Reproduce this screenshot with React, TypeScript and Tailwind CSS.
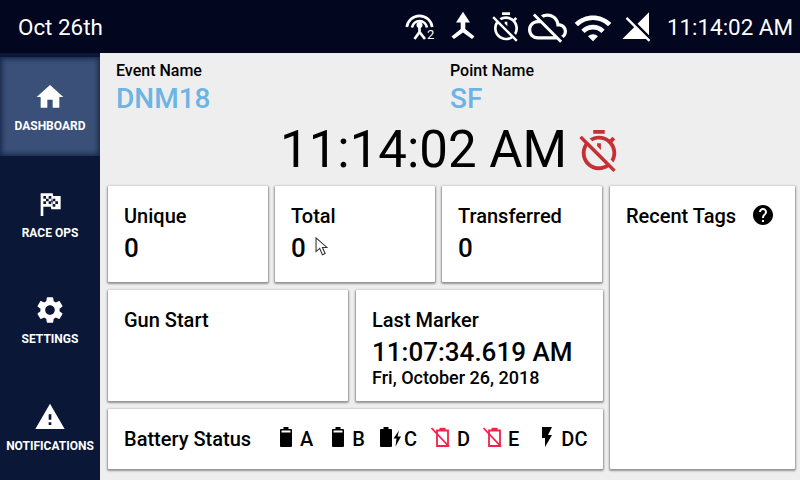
import type { ReactNode } from "react";

const Icon = ({ d, className }: { d: string; className: string }) => (
  <svg viewBox="0 0 24 24" fill="currentColor" className={className}>
    <path d={d} />
  </svg>
);

const HOME = "M10 20v-6h4v6h5v-8h3L12 3 2 12h3v8z";
const FLAG =
  "M14.4,6H20V16H13L12.6,14H7V21H5V4H14L14.4,6M14,14H16V12H18V10H16V8H14V10L13,8V6H11V8H9V6H7V8H9V10H7V12H9V10H11V12H13V10L14,12V14M11,10V8H13V10H11M14,10H16V12H14V10Z";
const GEAR =
  "M19.14 12.94c.04-.3.06-.61.06-.94 0-.32-.02-.64-.07-.94l2.03-1.58c.18-.14.23-.41.12-.61l-1.92-3.32c-.12-.22-.37-.29-.59-.22l-2.39.96c-.5-.38-1.03-.7-1.62-.94l-.36-2.54c-.04-.24-.24-.41-.48-.41h-3.84c-.24 0-.43.17-.47.41l-.36 2.54c-.59.24-1.13.57-1.62.94l-2.39-.96c-.22-.08-.47 0-.59.22L2.74 8.87c-.12.21-.08.47.12.61l2.03 1.58c-.05.3-.09.63-.09.94s.02.64.07.94l-2.03 1.58c-.18.14-.23.41-.12.61l1.92 3.32c.12.22.37.29.59.22l2.39-.96c.5.38 1.03.7 1.62.94l.36 2.54c.05.24.24.41.48.41h3.84c.24 0 .44-.17.47-.41l.36-2.54c.59-.24 1.13-.56 1.62-.94l2.39.96c.22.08.47 0 .59-.22l1.92-3.32c.12-.22.07-.47-.12-.61l-2.01-1.58zM12 15.6c-1.98 0-3.6-1.62-3.6-3.6s1.62-3.6 3.6-3.6 3.6 1.62 3.6 3.6-1.62 3.6-3.6 3.6z";
const WARNING = "M1 21h22L12 2 1 21zm12-3h-2v-2h2v2zm0-4h-2v-4h2v4z";
const TIMER_OFF =
  "M19.04 4.55l-1.42 1.42C16.07 4.74 14.12 4 12 4c-1.83 0-3.53.55-4.95 1.48l1.46 1.46C9.53 6.35 10.73 6 12 6c3.87 0 7 3.13 7 7 0 1.27-.35 2.47-.94 3.49l1.45 1.45C20.45 16.53 21 14.83 21 13c0-2.12-.74-4.07-1.97-5.61l1.42-1.42-1.41-1.42zM15 1H9v2h6V1zm-4 8.44l2 2V8h-2v1.44zM3.02 4L1.75 5.27 4.5 8.03C3.55 9.45 3 11.16 3 13c0 4.97 4.02 9 8.99 9 1.84 0 3.55-.55 4.98-1.5l2.5 2.5 1.27-1.27-7.71-7.71L3.02 4zM12 20c-3.87 0-7-3.13-7-7 0-1.28.35-2.48.95-3.52l9.56 9.56c-1.03.61-2.23.96-3.51.96z";
const CLOUD_OFF =
  "M19.35 10.04C18.67 6.59 15.64 4 12 4c-1.48 0-2.85.43-4.01 1.17l1.46 1.46C10.21 6.23 11.08 6 12 6c3.04 0 5.5 2.46 5.5 5.5v.5H19c1.66 0 3 1.34 3 3 0 1.13-.64 2.11-1.56 2.62l1.45 1.45C23.16 18.16 24 16.68 24 15c0-2.64-2.05-4.78-4.65-4.96zM3 5.27l2.75 2.74C2.56 8.15 0 10.77 0 14c0 3.31 2.69 6 6 6h11.73l2 2L21 20.73 4.27 4 3 5.27zM7.73 10l8 8H6c-2.21 0-4-1.79-4-4s1.79-4 4-4h1.73z";
const WIFI =
  "M1 9l2 2c4.97-4.97 13.03-4.97 18 0l2-2C16.93 2.93 7.08 2.93 1 9zm8 8l3 3 3-3c-1.65-1.66-4.34-1.66-6 0zm-4-4l2 2c2.76-2.76 7.24-2.76 10 0l2-2C15.14 9.14 8.87 9.14 5 13z";
const SIGNAL_OFF =
  "M21 1l-8.59 8.59L21 18.18V1zM4.77 4.5L3.5 5.77l6.36 6.36L1 21h17.73l2 2L22 21.73 4.77 4.5z";
const HELP =
  "M12 2C6.48 2 2 6.48 2 12s4.48 10 10 10 10-4.48 10-10S17.52 2 12 2zm1 17h-2v-2h2v2zm2.07-7.75l-.9.92C13.45 12.9 13 13.5 13 15h-2v-.5c0-1.1.45-2.1 1.17-2.83l1.24-1.26c.37-.36.59-.86.59-1.41 0-1.1-.9-2-2-2s-2 .9-2 2H8c0-2.21 1.79-4 4-4s4 1.79 4 4c0 .88-.36 1.68-.93 2.25z";
const BOLT = "M7 2v11h3v9l7-12h-4l4-8z";

const Merge = () => (
  <svg viewBox="0 0 40 40" fill="currentColor" className="w-[40px] h-[40px]">
    <path d="M20 4.800 27 15.500H22.300V22L31.500 29.500 29 32 20 25.500 11 32 8.500 29.500 17.700 22V15.500H13Z" />
  </svg>
);

const Antenna = () => (
  <svg viewBox="0 0 32 32" className="w-[32px] h-[32px] text-white" fill="none" stroke="currentColor" strokeWidth="2.7">
    <path d="M2.800 16A12.800 12.800 0 0 1 28.200 16" />
    <path d="M8 16.500A7.600 7.600 0 0 1 23 16.500" />
    <circle cx="15.500" cy="14" r="3" fill="currentColor" stroke="none" />
    <path d="M15.500 14v7L10.500 28M15.500 21l5.500 7" />
  </svg>
);

const Battery = () => (
  <svg viewBox="0 0 14 20" className="w-[14px] h-[20px] text-black" fill="currentColor">
    <path d="M4.500 0h5v2h2.600c.5 0 .9.4.9.9v16.200c0 .5-.4.9-.9.9H1.900c-.5 0-.9-.4-.9-.9V2.900c0-.5.4-.9.9-.9h2.600z" />
    <rect x="2.500" y="3.500" width="9" height="2" fill="#fff" />
  </svg>
);

const BatteryCharging = () => (
  <svg viewBox="0 0 24 20" className="w-[24px] h-[20px] text-black" fill="currentColor">
    <path d="M4.500 0h5v2h2.600c.5 0 .9.4.9.9v16.200c0 .5-.4.9-.9.9H1.900c-.5 0-.9-.4-.9-.9V2.900c0-.5.4-.9.9-.9h2.600z" />
    <path d="M20 3.500 14.500 11.500h3l-1 8 5.500-10h-3.500l1.500-6z" />
  </svg>
);

const BatteryOff = () => (
  <svg viewBox="0 0 20 20" className="w-[20px] h-[20px] text-[#f0244c]" fill="none" stroke="currentColor" strokeWidth="1.800">
    <path d="M6 3.500h11v15.500H6z" />
    <path d="M8.500 0.800h6v2.500h-6z" fill="currentColor" stroke="none" />
    <path d="M0.500 1 18 19.500" />
  </svg>
);

const Card = ({ className, children }: { className: string; children?: ReactNode }) => (
  <div className={`bg-white rounded-[1px] shadow-[0_1px_2px_1px_rgba(0,0,0,0.38)] ${className}`}>{children}</div>
);

const Stat = ({ label, value, children }: { label: string; value: string; children?: ReactNode }) => (
  <Card className="h-[96px] w-[160px] pl-[16px] pt-[18px] text-black">
    <div className="text-[20px] leading-[24px] font-medium">{label}</div>
    <div className="flex mt-[6px]">
      <span className="text-[26px] leading-[28px] font-medium">{value}</span>
      {children}
    </div>
  </Card>
);

const NavItem = ({ d, label, active }: { d: string; label: string; active?: boolean }) => (
  <div
    className={`h-[99px] flex flex-col items-center text-white ${
      active ? "bg-[#3a5078] shadow-[inset_0_0_5px_2px_rgba(11,23,55,0.7)]" : ""
    }`}
  >
    <Icon d={d} className="w-[32px] h-[32px] mt-[24px] shrink-0" />
    <span className="text-[12px] leading-[14px] font-bold mt-[6px] whitespace-nowrap">{label}</span>
  </div>
);

const Cell = ({ children, label, gap }: { children: ReactNode; label: string; gap: string }) => (
  <div className={`flex items-center ${gap}`}>
    <div className="flex -mt-[4px]">{children}</div>
    <span className="text-[20px] leading-[24px] font-medium">{label}</span>
  </div>
);

export default function App() {
  return (
    <div className="w-[800px] h-[480px] flex flex-col overflow-hidden bg-[#eeeeee] font-['Roboto',sans-serif]">
      <header className="h-[53px] shrink-0 bg-[#02061f] text-white flex items-center pl-[18px] pr-[7px]">
        <span className="text-[22.4px] leading-[28px]">Oct 26th</span>
        <div className="ml-auto flex items-center">
          <div className="relative w-[39px] h-[32px]">
            <Antenna />
            <span className="absolute left-[23px] top-[17px] text-[13px] leading-[14px]">2</span>
          </div>
          <Merge />
          <Icon d={TIMER_OFF} className="w-[32px] h-[32px] ml-[7px]" />
          <Icon d={CLOUD_OFF} className="w-[39px] h-[39px] ml-[6px]" />
          <Icon d={WIFI} className="w-[40px] h-[40px] ml-[6px] mt-[2px]" />
          <Icon d={SIGNAL_OFF} className="w-[32px] h-[32px] ml-[8px]" />
          <span className="text-[22.4px] leading-[28px] ml-[14px]">11:14:02 AM</span>
        </div>
      </header>
      <div className="flex flex-1 min-h-0">
        <nav className="w-[100px] shrink-0 bg-[#0b1737] flex flex-col pt-[4px] gap-[7.5px]">
          <NavItem d={HOME} label="DASHBOARD" active />
          <NavItem d={FLAG} label="RACE OPS" />
          <NavItem d={GEAR} label="SETTINGS" />
          <NavItem d={WARNING} label="NOTIFICATIONS" />
        </nav>
        <main className="flex-1 min-w-0 pl-[8px] text-black">
          <div className="flex h-[60px] pt-[10px]">
            <div className="w-[342px] pl-[8px]">
              <div className="text-[16px] leading-[16px] font-medium">Event Name</div>
              <div className="text-[28px] leading-[30px] font-medium text-[#6cb4e4] mt-[5px]">DNM18</div>
            </div>
            <div>
              <div className="text-[16px] leading-[16px] font-medium">Point Name</div>
              <div className="text-[28px] leading-[30px] font-medium text-[#6cb4e4] mt-[5px]">SF</div>
            </div>
          </div>
          <div className="flex items-center h-[73px] pl-[172px]">
            <span className="text-[51px] leading-[60px] mt-[1px]">11:14:02 AM</span>
            <Icon d={TIMER_OFF} className="w-[46px] h-[46px] ml-[9px] mt-[3px] text-[#c62f34]" />
          </div>
          <div className="flex gap-[7px]">
            <div className="flex flex-col gap-[8px] w-[495px]">
              <div className="flex gap-[7px]">
                <Stat label="Unique" value="0" />
                <Stat label="Total" value="0">
                  <svg viewBox="0 0 14 22" className="w-[13px] h-[20px] ml-[9px] mt-[3px]" fill="#fff" stroke="#333" strokeWidth="1.200">
                    <path d="M1 1v15l4-3.500 3 7 3-1.300-3-6.700h5z" />
                  </svg>
                </Stat>
                <Stat label="Transferred" value="0" />
              </div>
              <div className="flex gap-[8px]">
                <Card className="h-[111px] w-[240px] pl-[16px] pt-[18px]">
                  <div className="text-[20px] leading-[24px] font-medium">Gun Start</div>
                </Card>
                <Card className="h-[111px] w-[247px] pl-[16px] pt-[18px]">
                  <div className="text-[20px] leading-[24px] font-medium">Last Marker</div>
                  <div className="text-[26px] leading-[30px] font-medium mt-[5px]">11:07:34.619 AM</div>
                  <div className="text-[18px] leading-[20px] font-medium mt-[1px]">Fri, October 26, 2018</div>
                </Card>
              </div>
              <Card className="h-[60px] flex items-center pl-[16px]">
                <span className="text-[20px] leading-[24px] font-medium w-[155px] shrink-0">Battery Status</span>
                <Cell label="A" gap="gap-[7px]"><Battery /></Cell>
                <div className="ml-[18px]"><Cell label="B" gap="gap-[7px]"><Battery /></Cell></div>
                <div className="ml-[14px]"><Cell label="C" gap="gap-[1px]"><BatteryCharging /></Cell></div>
                <div className="ml-[14px]"><Cell label="D" gap="gap-[6px]"><BatteryOff /></Cell></div>
                <div className="ml-[13px]"><Cell label="E" gap="gap-[5px]"><BatteryOff /></Cell></div>
                <div className="ml-[16px]"><Cell label="DC" gap="gap-[2px]"><Icon d={BOLT} className="w-[24px] h-[24px] text-black" /></Cell></div>
              </Card>
            </div>
            <Card className="w-[185px] h-[283px] pl-[16px] pt-[18px]">
              <div className="flex items-center">
                <span className="text-[20px] leading-[24px] font-medium">Recent Tags</span>
                <Icon d={HELP} className="w-[24px] h-[24px] ml-[15px] -mt-[3px]" />
              </div>
            </Card>
          </div>
        </main>
      </div>
    </div>
  );
}
